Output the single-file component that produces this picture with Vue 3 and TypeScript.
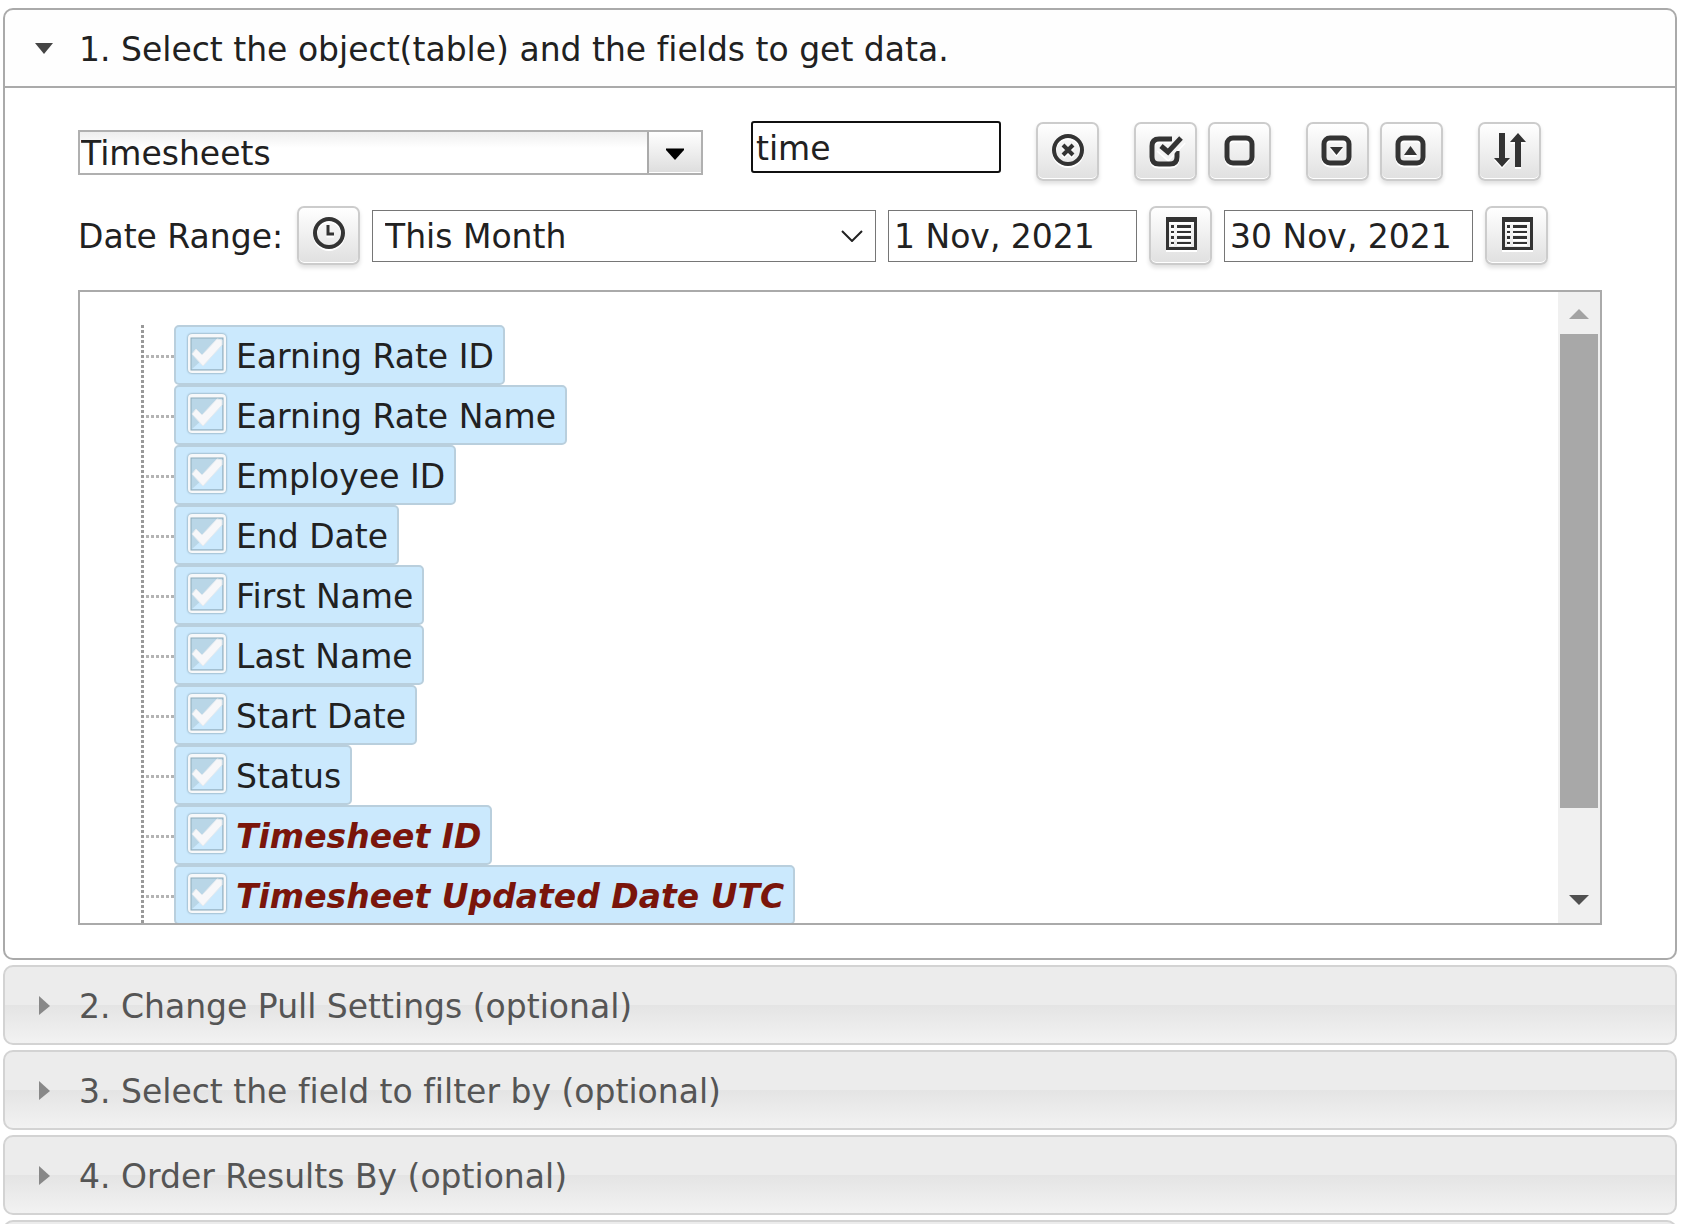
<script setup lang="ts">
import { ref } from 'vue'

interface Field {
  name: string
  key?: boolean
}

const fields: Field[] = [
  { name: 'Earning Rate ID' },
  { name: 'Earning Rate Name' },
  { name: 'Employee ID' },
  { name: 'End Date' },
  { name: 'First Name' },
  { name: 'Last Name' },
  { name: 'Start Date' },
  { name: 'Status' },
  { name: 'Timesheet ID', key: true },
  { name: 'Timesheet Updated Date UTC', key: true },
]

const sections = [
  '2. Change Pull Settings (optional)',
  '3. Select the field to filter by (optional)',
  '4. Order Results By (optional)',
]

const selected = ref(fields.map((f) => f.name))
const objectName = ref('Timesheets')
const search = ref('time')
const range = ref('This Month')
const from = ref('1 Nov, 2021')
const to = ref('30 Nov, 2021')
</script>

<template>
  <main class="accordion">
    <section class="panel">
      <h3 class="panel-title">
        <button type="button" class="head open" aria-expanded="true">
          <svg class="caret" viewBox="0 0 20 20" aria-hidden="true"><path d="M1 4h18l-9 11z" /></svg>
          <span>1. Select the object(table) and the fields to get data.</span>
        </button>
      </h3>
      <div class="body">
        <div class="toolbar objects">
          <div class="combo">
            <input v-model="objectName" type="text" aria-label="Object" />
            <button type="button" aria-label="Show objects">
              <svg viewBox="0 0 18 12" width="18" height="12">
                <path d="M0 0h18v2l-9 10L0 2z" fill="#000" />
                <path d="M0 0h18v1H0z" fill="#777" />
              </svg>
            </button>
          </div>
          <input v-model="search" class="field search" type="text" aria-label="Search fields" />
          <button type="button" class="tool" aria-label="Clear search">
            <svg viewBox="0 0 36 36">
              <circle cx="18" cy="16" r="14" class="line" stroke-width="4" />
              <path d="M13 11l10 10M23 11l-10 10" class="line" stroke-width="4" />
            </svg>
          </button>
          <div class="pair">
            <button type="button" class="tool" aria-label="Check all">
              <svg viewBox="0 0 36 36">
                <path d="M24 5H11q-7 0-7 7v11q0 7 7 7h11q7 0 7-7v-6" class="line" stroke-width="5" />
                <path d="M12 12l8 7L34 4" class="halo" stroke-width="10" />
                <path d="M13 12l7 6L33 4" class="line" stroke-width="5" />
              </svg>
            </button>
            <button type="button" class="tool" aria-label="Uncheck all">
              <svg viewBox="0 0 36 36"><rect x="5" y="4" width="25" height="25" rx="6" class="line" stroke-width="5" /></svg>
            </button>
          </div>
          <div class="pair">
            <button type="button" class="tool" aria-label="Expand all">
              <svg viewBox="0 0 36 36">
                <rect x="4" y="4" width="25" height="25" rx="6" class="line" stroke-width="5" />
                <path d="M10 13h13l-6.500 8z" />
              </svg>
            </button>
            <button type="button" class="tool" aria-label="Collapse all">
              <svg viewBox="0 0 36 36">
                <rect x="4" y="4" width="25" height="25" rx="6" class="line" stroke-width="5" />
                <path d="M10 21h13l-6.500-9z" />
              </svg>
            </button>
          </div>
          <button type="button" class="tool" aria-label="Sort">
            <svg viewBox="0 0 36 36">
              <path d="M7-1h6v25h5l-8 9-8-9h5zM23 33h6V8h5l-8-9-8 9h5z" />
            </svg>
          </button>
        </div>

        <div class="toolbar dates">
          <label for="range" class="range-label">Date Range:</label>
          <button type="button" class="tool" aria-label="Use time">
            <svg viewBox="0 0 36 36">
              <circle cx="18" cy="15" r="14" class="line" stroke-width="4" />
              <path d="M17 7v9h6" class="line" stroke-width="3" />
            </svg>
          </button>
          <div class="select">
            <select id="range" v-model="range">
              <option>This Month</option>
            </select>
            <svg viewBox="0 0 22 12" width="22" height="12" aria-hidden="true">
              <path d="M1 1l10 10L21 1" fill="none" stroke="#222" stroke-width="2" />
            </svg>
          </div>
          <input v-model="from" class="field" type="text" aria-label="Start date" />
          <button type="button" class="tool" aria-label="Pick start date">
            <svg viewBox="0 1 36 36">
              <path fill-rule="evenodd" d="M3 0h31v33H3zM6 5v25h25V5zM8 8h3v3H8zM14 8h14v3H14zM8 14h3v2H8zM14 14h14v2H14zM8 19h3v3H8zM14 19h14v3H14zM8 25h3v2H8zM14 25h14v2H14z" />
            </svg>
          </button>
          <input v-model="to" class="field" type="text" aria-label="End date" />
          <button type="button" class="tool" aria-label="Pick end date">
            <svg viewBox="0 1 36 36">
              <path fill-rule="evenodd" d="M3 0h31v33H3zM6 5v25h25V5zM8 8h3v3H8zM14 8h14v3H14zM8 14h3v2H8zM14 14h14v2H14zM8 19h3v3H8zM14 19h14v3H14zM8 25h3v2H8zM14 25h14v2H14z" />
            </svg>
          </button>
        </div>

        <div class="tree">
          <ul class="nodes">
            <li v-for="field in fields" :key="field.name">
              <label :class="{ key: field.key }">
                <input v-model="selected" type="checkbox" :value="field.name" />
                <svg class="check" viewBox="0 0 42 42" aria-hidden="true">
                  <rect x="2" y="2" width="38" height="39" rx="4" class="frame" />
                  <rect x="5" y="6" width="32" height="32" fill="#b9d6e7" stroke="#8dabbc" />
                  <path d="M6 37L36 10v27z" fill="#cbe9fd" />
                  <path d="M6 22l4-5 6 6L31 7l5 1v5L17 34z" class="tick" />
                </svg>
                <span>{{ field.name }}</span>
              </label>
            </li>
          </ul>
          <div class="scrollbar" aria-hidden="true">
            <svg viewBox="0 0 42 42"><path d="M11 27h20L21 17z" fill="#a3a3a3" /></svg>
            <div class="track"><div class="thumb"></div></div>
            <svg viewBox="0 0 42 42"><path d="M11 14h20L21 24z" fill="#505050" /></svg>
          </div>
        </div>
      </div>
    </section>

    <h3 v-for="title in sections" :key="title" class="panel-title">
      <button type="button" class="head" aria-expanded="false">
        <svg class="caret" viewBox="0 0 20 20" aria-hidden="true"><path d="M5 0v19l11-9z" /></svg>
        <span>{{ title }}</span>
      </button>
    </h3>
    <div class="head"></div>
  </main>
</template>

<style>
body {
  margin: 0;
  background: #fff;
}
</style>

<style scoped>
* {
  box-sizing: border-box;
}

.accordion {
  display: flex;
  flex-direction: column;
  gap: 5px;
  height: 100vh;
  overflow: hidden;
  padding: 8px 5px 0 3px;
  font-family: Verdana, 'DejaVu Sans', sans-serif;
  font-size: 33px;
  line-height: 40px;
  font-variant-ligatures: none;
  color: #212121;
}

.accordion > * {
  flex-shrink: 0;
}

button,
input,
select {
  margin: 0;
  font: inherit;
  font-variant-ligatures: none;
  color: inherit;
}

.panel-title {
  margin: 0;
  font-size: 33px;
  font-weight: normal;
}

.head {
  display: flex;
  align-items: center;
  gap: 25px;
  width: 100%;
  height: 80px;
  padding: 2px 29px 0;
  text-align: left;
  color: #555;
  background: linear-gradient(#ececec 0, #ececec 50%, #e4e4e4 50%, #f2f2f2 100%);
  border: 2px solid #d3d3d3;
  border-radius: 10px;
}

.head span {
  padding-top: 2px;
}

.head.open {
  color: #212121;
  background: #fefefe;
  border-color: #aaa;
  border-radius: 10px 10px 0 0;
}

.caret {
  width: 20px;
  height: 20px;
  flex: none;
  fill: #888;
}

.open .caret {
  fill: #454545;
}

.body {
  padding: 34px 73px 33px;
  border: 2px solid #aaa;
  border-top: 0;
  border-radius: 0 0 10px 10px;
}

.toolbar {
  display: flex;
  align-items: center;
  height: 59px;
  margin-bottom: 25px;
}

.objects {
  gap: 35px;
}

.pair {
  display: flex;
  gap: 11px;
}

.dates {
  gap: 12px;
}

.combo {
  display: flex;
  width: 625px;
  height: 45px;
  margin-top: 2px;
  margin-right: 13px;
  border: 2px solid #b0b0b0;
}

.combo input {
  flex: 1;
  min-width: 0;
  padding: 2px 1px 0;
  border: 0;
  background: linear-gradient(#eee, #fff 16px);
}

.combo button {
  display: flex;
  align-items: center;
  justify-content: center;
  width: 54px;
  padding: 2px 0 0;
  border: 0;
  border-left: 2px solid #aaa;
  background: linear-gradient(#fff, #ddd);
  box-shadow: inset 0 -1px #fff;
}

.field {
  width: 249px;
  height: 52px;
  padding: 2px 5px 0;
  background: #fff;
  border: 1px solid #767676;
}

.search {
  width: 250px;
  padding: 2px 3px 0;
  margin-bottom: 9px;
  border: 2px solid #101010;
  border-radius: 3px;
}

.tool {
  display: flex;
  align-items: center;
  justify-content: center;
  width: 63px;
  height: 59px;
  flex: none;
  padding: 0;
  border: 2px solid #ccc;
  border-radius: 7px;
  background: linear-gradient(#fff, #e0e0e0);
  box-shadow: inset 0 -1px #fff, 0 3px 4px rgba(0, 0, 0, 0.12);
}

.tool svg {
  width: 36px;
  height: 36px;
  overflow: visible;
  fill: #333;
  filter: drop-shadow(0 2px 0 #fff);
}

.tool .line {
  fill: none;
  stroke: #333;
}

.tool .halo {
  fill: none;
  stroke: #f4f4f4;
}

.range-label {
  width: 207px;
  padding-top: 2px;
}

.select {
  display: grid;
  align-items: center;
  width: 504px;
}

.select > * {
  grid-area: 1 / 1;
}

.select select {
  width: 100%;
  height: 52px;
  padding: 2px 12px 0;
  appearance: none;
  background: #fff;
  border: 1px solid #767676;
  border-radius: 0;
}

.select svg {
  justify-self: end;
  margin-right: 13px;
  pointer-events: none;
}

.tree {
  display: flex;
  justify-content: space-between;
  height: 635px;
  border: 2px solid #aaa;
  overflow: hidden;
}

.nodes {
  margin: 33px 0 0 61px;
  padding: 0;
  list-style: none;
}

.nodes li {
  display: flex;
  align-items: center;
  height: 60px;
  padding-left: 3px;
  background: repeating-linear-gradient(#999 0 3px, #fff 3px 5px) left / 3px 100% no-repeat;
}

.nodes li::before {
  content: '';
  width: 30px;
  height: 3px;
  margin-top: 2px;
  background: repeating-linear-gradient(90deg, #fff 0 2px, #b4b4b4 2px 5px);
}

.nodes label {
  display: flex;
  align-items: center;
  height: 60px;
  padding: 0 9px 0 10px;
  gap: 8px;
  white-space: nowrap;
  background: #cbe9fd;
  border: 2px solid #b9cfdd;
  border-radius: 5px;
}

.nodes label.key {
  color: #7a150b;
  font-weight: bold;
  font-style: italic;
}

.nodes span {
  padding-top: 4px;
}

.nodes input {
  position: absolute;
  opacity: 0;
}

.check {
  width: 42px;
  height: 42px;
  margin-bottom: 4px;
  overflow: visible;
}

.frame {
  fill: #f6f8fa;
  filter: drop-shadow(0 0 1px #6f8998);
}

.tick {
  fill: #f7f7f9;
  stroke: #e4eaef;
  stroke-linejoin: round;
}

.scrollbar {
  display: flex;
  flex-direction: column;
  width: 42px;
  background: #f0f0f0;
}

.scrollbar svg {
  width: 42px;
  height: 42px;
}

.track {
  flex: 1;
  padding: 0 2px;
}

.thumb {
  height: 474px;
  background: #a8a8a8;
}
</style>
